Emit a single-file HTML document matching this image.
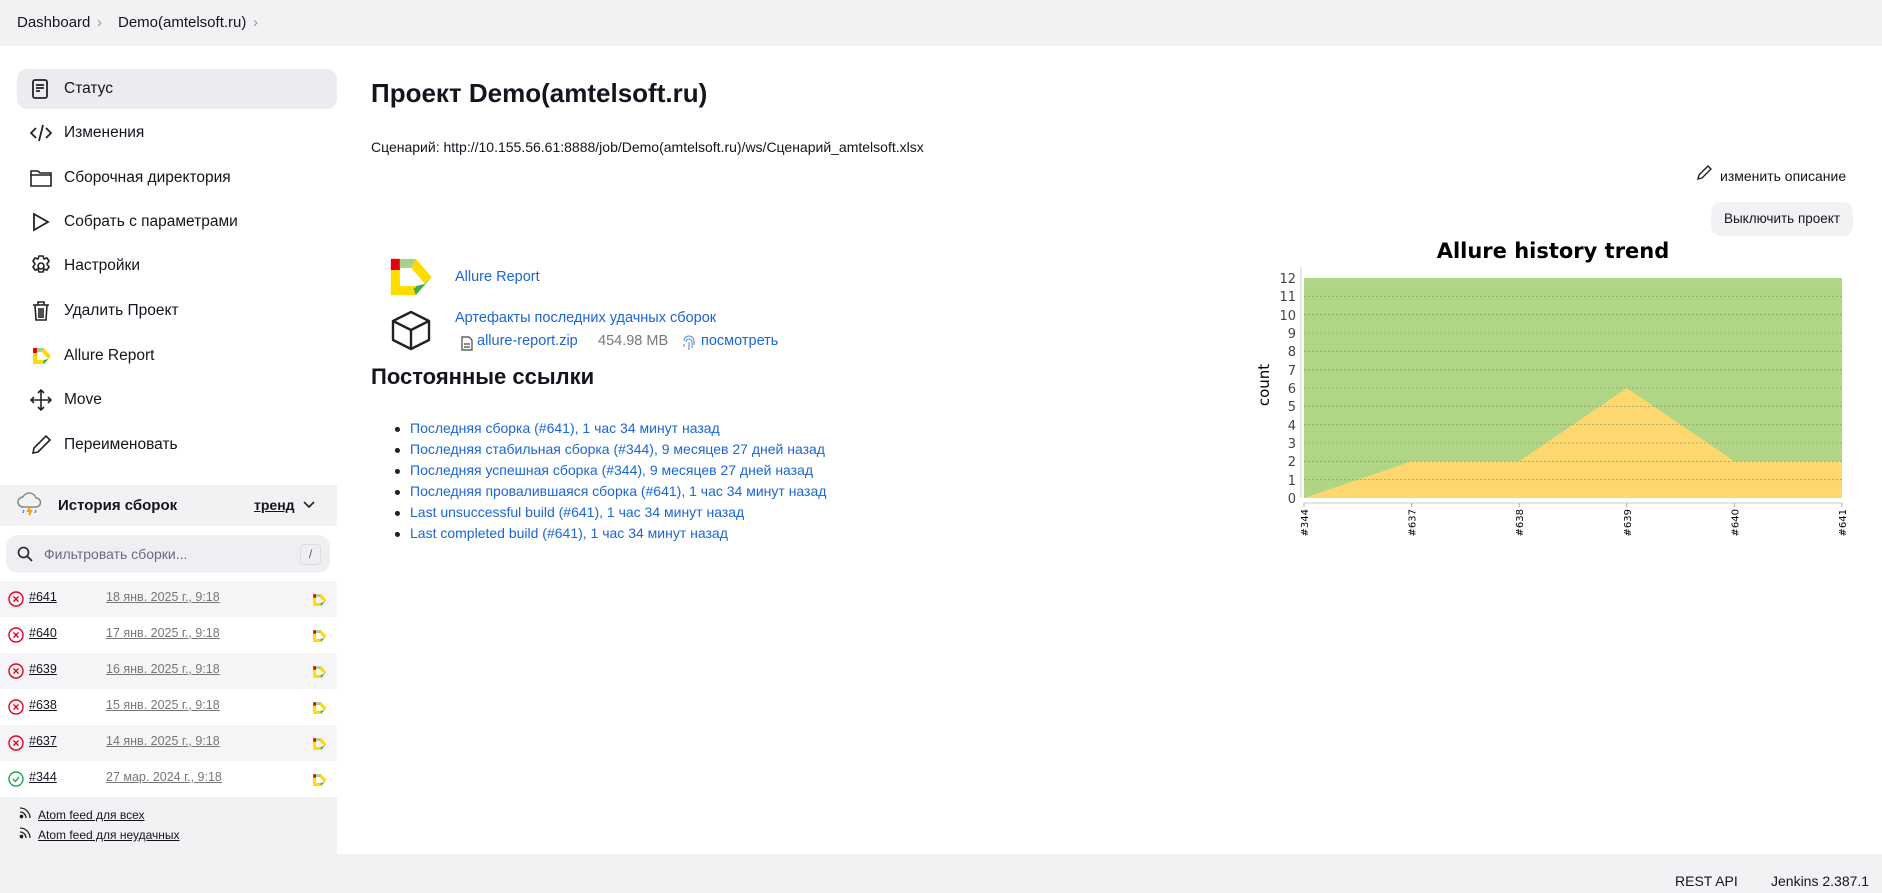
<!DOCTYPE html>
<html><head><meta charset="utf-8"><style>
*{box-sizing:border-box;margin:0;padding:0}
body{width:1882px;height:893px;overflow:hidden;background:#fff;font-family:"Liberation Sans","Noto Sans CJK SC",sans-serif;color:#14141f;position:relative}
.abs{position:absolute}
.bc{left:0;top:0;width:1882px;height:46px;background:#f2f2f5}
.bc span{position:absolute;top:14px;font-size:15px;color:#14141f}
.side .it{position:absolute;left:17px;width:320px;height:40px;border-radius:10px;font-size:15.5px}
.side .it svg{position:absolute;left:13px;top:9px}
.side .it span{position:absolute;left:47px;top:11px}
a{color:#1a66d6;text-decoration:none}
.row{position:absolute;left:0;width:337px;height:36px;font-size:12.5px}
.row .n{position:absolute;left:29px;top:9px;text-decoration:underline;color:#14141f}
.row .d{position:absolute;left:106px;top:9px;text-decoration:underline;color:#777}
ul li{position:absolute;left:410px;font-size:14px;color:#1a66d6}
ul li:before{content:"";position:absolute;left:-15px;top:7px;width:5px;height:5px;border-radius:50%;background:#222}
</style></head><body>
<svg width="0" height="0" style="position:absolute"><defs>
<g id="al"><path d="M3 3h4v5H3z" fill="#e3000f"/><path d="M7 3h7v4H7z" fill="#a8d18d"/><path d="M3 8h4v11H3zM7 15h7v4H7zM14 3l7 8-3 3-6-7z" fill="#fddc00"/><path d="M18 14l3-3-7 8-1-3z" fill="#3fae49"/><path d="M14 15l4-1-4 5z" fill="#3fae49"/></g>
</defs></svg>
<div class="abs bc">
<span style="left:17px">Dashboard</span>
<span style="left:97px;color:#999">›</span>
<span style="left:118px">Demo(amtelsoft.ru)</span>
<span style="left:253px;color:#999">›</span>
</div>

<div class="side">
<div class="it" style="top:69px;background:#ebebf0"><svg width="20" height="22" viewBox="0 0 20 22" fill="none" stroke="#222" stroke-width="1.8"><rect x="3" y="2" width="14" height="18" rx="2"/><path d="M6 7h8M6 10h8M6 13h4"/></svg><span>Статус</span></div>
<div class="it" style="top:113px"><svg width="22" height="22" viewBox="0 0 22 22" fill="none" stroke="#222" stroke-width="1.8"><path d="M6 6l-5 5 5 5M16 6l5 5-5 5M13 3l-4 16"/></svg><span>Изменения</span></div>
<div class="it" style="top:158px"><svg width="22" height="22" viewBox="0 0 22 22" fill="none" stroke="#222" stroke-width="1.6"><path d="M1 4h7l2 2h11v13H1z M1 8h20"/></svg><span>Сборочная директория</span></div>
<div class="it" style="top:202px"><svg width="22" height="22" viewBox="0 0 22 22" fill="none" stroke="#222" stroke-width="1.8"><path d="M4 3l14 8-14 8z"/></svg><span>Собрать с параметрами</span></div>
<div class="it" style="top:246px"><svg width="22" height="22" viewBox="0 0 22 22" fill="none" stroke="#222" stroke-width="1.6"><circle cx="11" cy="11" r="3"/><path d="M9 1h4l1 3 3-1 2 3-2 3 2 3-2 3-3-1-1 3H9l-1-3-3 1-2-3 2-3-2-3 2-3 3 1z"/></svg><span>Настройки</span></div>
<div class="it" style="top:291px"><svg width="22" height="22" viewBox="0 0 22 22" fill="none" stroke="#222" stroke-width="1.6"><path d="M3 5h16M8 5V2h6v3M5 5l1 15h10l1-15M9 8v10M11 8v10M13 8v10"/></svg><span>Удалить Проект</span></div>
<div class="it" style="top:336px"><svg width="22" height="22" viewBox="0 0 22 22"><use href="#al"/></svg><span>Allure Report</span></div>
<div class="it" style="top:380px"><svg width="22" height="22" viewBox="0 0 22 22" fill="none" stroke="#222" stroke-width="1.6"><path d="M11 1v20M1 11h20M8 4l3-3 3 3M8 18l3 3 3-3M4 8l-3 3 3 3M18 8l3 3-3 3"/></svg><span>Move</span></div>
<div class="it" style="top:425px"><svg width="22" height="22" viewBox="0 0 22 22" fill="none" stroke="#222" stroke-width="1.6"><path d="M3 19l1-5L16 2l4 4L8 18z"/></svg><span>Переименовать</span></div>
</div>

<div class="abs" style="left:0;top:485px;width:337px;height:41px;background:#f2f2f5">
<svg class="abs" style="left:17px;top:7px" width="26" height="26" viewBox="0 0 26 26"><path d="M6 15a5 5 0 010-10 7 7 0 0113 1 4 4 0 010 9z" fill="none" stroke="#888" stroke-width="1.5"/><path d="M13 15l-2 4h3l-2 4" stroke="#f90" stroke-width="2" fill="none"/><path d="M7 18l-1 3M19 18l-1 3" stroke="#39f" stroke-width="1.5"/></svg>
<span class="abs" style="left:58px;top:12px;font-size:15px;font-weight:bold">История сборок</span>
<span class="abs" style="left:254px;top:12px;font-size:14px;font-weight:bold;text-decoration:underline">тренд</span>
<svg class="abs" style="left:303px;top:16px" width="12" height="8"><path d="M1 1l5 5 5-5" stroke="#222" stroke-width="1.6" fill="none"/></svg>
</div>
<div class="abs" style="left:6px;top:535px;width:324px;height:38px;background:#efeff3;border-radius:12px">
<svg class="abs" style="left:11px;top:11px" width="16" height="16" fill="none" stroke="#222" stroke-width="1.6"><circle cx="6.5" cy="6.5" r="5"/><path d="M10 10l5 5"/></svg>
<span class="abs" style="left:38px;top:11px;font-size:14px;color:#6b6b80">Фильтровать сборки...</span>
<span class="abs" style="left:294px;top:9px;width:21px;height:21px;border:1px solid #ddd;border-radius:4px;font-size:12px;text-align:center;line-height:19px;color:#555">/</span>
</div>

<div class="row" style="top:581px;background:#f5f5f7"></div>
<div class="row" style="top:617px"></div>
<div class="row" style="top:653px;background:#f5f5f7"></div>
<div class="row" style="top:689px"></div>
<div class="row" style="top:725px;background:#f5f5f7"></div>
<div class="row" style="top:761px"></div>

<div id="rows"></div>
<script>
var R=[["#641","18 янв. 2025 г., 9:18",0],["#640","17 янв. 2025 г., 9:18",0],["#639","16 янв. 2025 г., 9:18",0],["#638","15 янв. 2025 г., 9:18",0],["#637","14 янв. 2025 г., 9:18",0],["#344","27 мар. 2024 г., 9:18",1]];
var h="";R.forEach(function(r,i){var t=581+i*36;
var ic=r[2]?'<path d="M5 8l2.5 2.5L11 6" stroke="#1ea446" stroke-width="1.4" fill="none"/>':'<path d="M5.5 5.5l5 5M10.5 5.5l-5 5" stroke="#e6001f" stroke-width="1.4"/>';
var c=r[2]?"#1ea446":"#e6001f";
h+='<div class="row" style="top:'+t+'px"><svg class="abs" style="left:8px;top:10px" width="16" height="16"><circle cx="8" cy="8" r="7" fill="none" stroke="'+c+'" stroke-width="1.4"/>'+ic+'</svg><span class="n">'+r[0]+'</span><span class="d">'+r[1]+'</span><svg class="abs" style="left:311px;top:11px" width="16" height="16" viewBox="0 0 22 22"><use href="#al"/></svg></div>';});
document.getElementById("rows").innerHTML=h;
</script>

<div class="abs" style="left:0;top:797px;width:337px;height:57px;background:#f2f2f5;font-size:12px">
<svg class="abs" style="left:19px;top:9px" width="13" height="13" fill="none" stroke="#222" stroke-width="1.3"><circle cx="2.5" cy="10.5" r="1.2" fill="#222"/><path d="M1 6a6 6 0 016 6M1 2a10 10 0 0110 10"/></svg>
<span class="abs" style="left:38px;top:11px;text-decoration:underline">Atom feed для всех</span>
<svg class="abs" style="left:19px;top:29px" width="13" height="13" fill="none" stroke="#222" stroke-width="1.3"><circle cx="2.5" cy="10.5" r="1.2" fill="#222"/><path d="M1 6a6 6 0 016 6M1 2a10 10 0 0110 10"/></svg>
<span class="abs" style="left:38px;top:31px;text-decoration:underline">Atom feed для неудачных</span>
</div>

<div class="abs" style="left:0;top:854px;width:1882px;height:39px;background:#f2f2f5">
<span class="abs" style="left:1675px;top:19px;font-size:14px">REST API</span>
<span class="abs" style="left:1771px;top:19px;font-size:14px">Jenkins 2.387.1</span>
</div>

<div class="abs" style="left:371px;top:78px;font-size:26px;font-weight:bold">Проект Demo(amtelsoft.ru)</div>
<div class="abs" style="left:371px;top:139px;font-size:14px">Сценарий: http://10.155.56.61:8888/job/Demo(amtelsoft.ru)/ws/Сценарий_amtelsoft.xlsx</div>
<svg class="abs" style="left:1696px;top:165px" width="16" height="16" fill="none" stroke="#222" stroke-width="1.4"><path d="M2 14l1-4 9-9 3 3-9 9z"/></svg>
<span class="abs" style="left:1720px;top:168px;font-size:14px">изменить описание</span>
<div class="abs" style="left:1711px;top:202px;width:142px;height:34px;background:#f2f2f5;border-radius:10px;font-size:13.5px;text-align:center;line-height:34px">Выключить проект</div>

<svg class="abs" style="left:384px;top:252px" width="50" height="50" viewBox="0 0 22 22"><use href="#al"/></svg>
<a class="abs" style="left:455px;top:269px;font-size:14.5px">Allure Report</a>
<svg class="abs" style="left:390px;top:309px" width="42" height="42" fill="none" stroke="#222" stroke-width="2.4" stroke-linejoin="round"><path d="M21 3L39 12v19L21 40 3 31V12zM3 12l18 9 18-9M21 21v19"/></svg>
<a class="abs" style="left:455px;top:310px;font-size:14.5px">Артефакты последних удачных сборок</a>
<svg class="abs" style="left:461px;top:336px" width="12" height="15" fill="none" stroke="#444" stroke-width="1.2"><path d="M1 1h7l3 3v10H1z M3 8h6M3 11h6"/></svg>
<a class="abs" style="left:477px;top:333px;font-size:14.5px">allure-report.zip</a>
<span class="abs" style="left:598px;top:333px;font-size:14.5px;color:#777">454.98 MB</span>
<svg class="abs" style="left:682px;top:335px" width="14" height="16" fill="none" stroke="#5b8fd8" stroke-width="1.1"><path d="M2 6a5 5 0 0110 0v4M4 7a3 3 0 016 0v6M7 7v8M2 9v3"/></svg>
<a class="abs" style="left:701px;top:333px;font-size:14.5px">посмотреть</a>
<div class="abs" style="left:371px;top:364px;font-size:22px;font-weight:bold">Постоянные ссылки</div>
<ul>
<li style="top:420px">Последняя сборка (#641), 1 час 34 минут назад</li>
<li style="top:441px">Последняя стабильная сборка (#344), 9 месяцев 27 дней назад</li>
<li style="top:462px">Последняя успешная сборка (#344), 9 месяцев 27 дней назад</li>
<li style="top:483px">Последняя провалившаяся сборка (#641), 1 час 34 минут назад</li>
<li style="top:504px">Last unsuccessful build (#641), 1 час 34 минут назад</li>
<li style="top:525px">Last completed build (#641), 1 час 34 минут назад</li>
</ul>

<svg class="abs" style="left:1240px;top:220px" width="642" height="330" font-family="DejaVu Sans,sans-serif">
<text x="313" y="38" font-size="21" font-weight="bold" text-anchor="middle">Allure history trend</text>
<rect x="64" y="58" width="538" height="220" fill="#afd585"/>
<polygon points="64,278 171.6,241.3 279.2,241.3 386.8,168 494.4,241.3 602,241.3 602,278" fill="#fed86f"/>
<g stroke="#8aa870" stroke-dasharray="2,2" stroke-width="0.8">
<path d="M64 76.3h538M64 94.7h538M64 113h538M64 131.3h538M64 149.7h538M64 168h538M64 186.3h538M64 204.7h538M64 223h538M64 241.3h538M64 259.7h538"/></g>
<path d="M61 47v231M64 283h538" stroke="#ccc" stroke-width="1"/>
<g stroke="#aaa"><path d="M64 283v4M171.6 283v4M279.2 283v4M386.8 283v4M494.4 283v4M602 283v4"/></g>
<g font-size="13" fill="#444" text-anchor="end">
<text x="56" y="283">0</text><text x="56" y="265">1</text><text x="56" y="246">2</text><text x="56" y="228">3</text><text x="56" y="210">4</text><text x="56" y="191">5</text><text x="56" y="173">6</text><text x="56" y="155">7</text><text x="56" y="136">8</text><text x="56" y="118">9</text><text x="56" y="100">10</text><text x="56" y="81">11</text><text x="56" y="63">12</text>
</g>
<text transform="translate(29,165) rotate(-90)" font-size="15" text-anchor="middle">count</text>
<g font-size="10" text-anchor="end">
<text transform="translate(68,289) rotate(-90)">#344</text>
<text transform="translate(175.6,289) rotate(-90)">#637</text>
<text transform="translate(283.2,289) rotate(-90)">#638</text>
<text transform="translate(390.8,289) rotate(-90)">#639</text>
<text transform="translate(498.4,289) rotate(-90)">#640</text>
<text transform="translate(606,289) rotate(-90)">#641</text>
</g>
</svg>
</body></html>
